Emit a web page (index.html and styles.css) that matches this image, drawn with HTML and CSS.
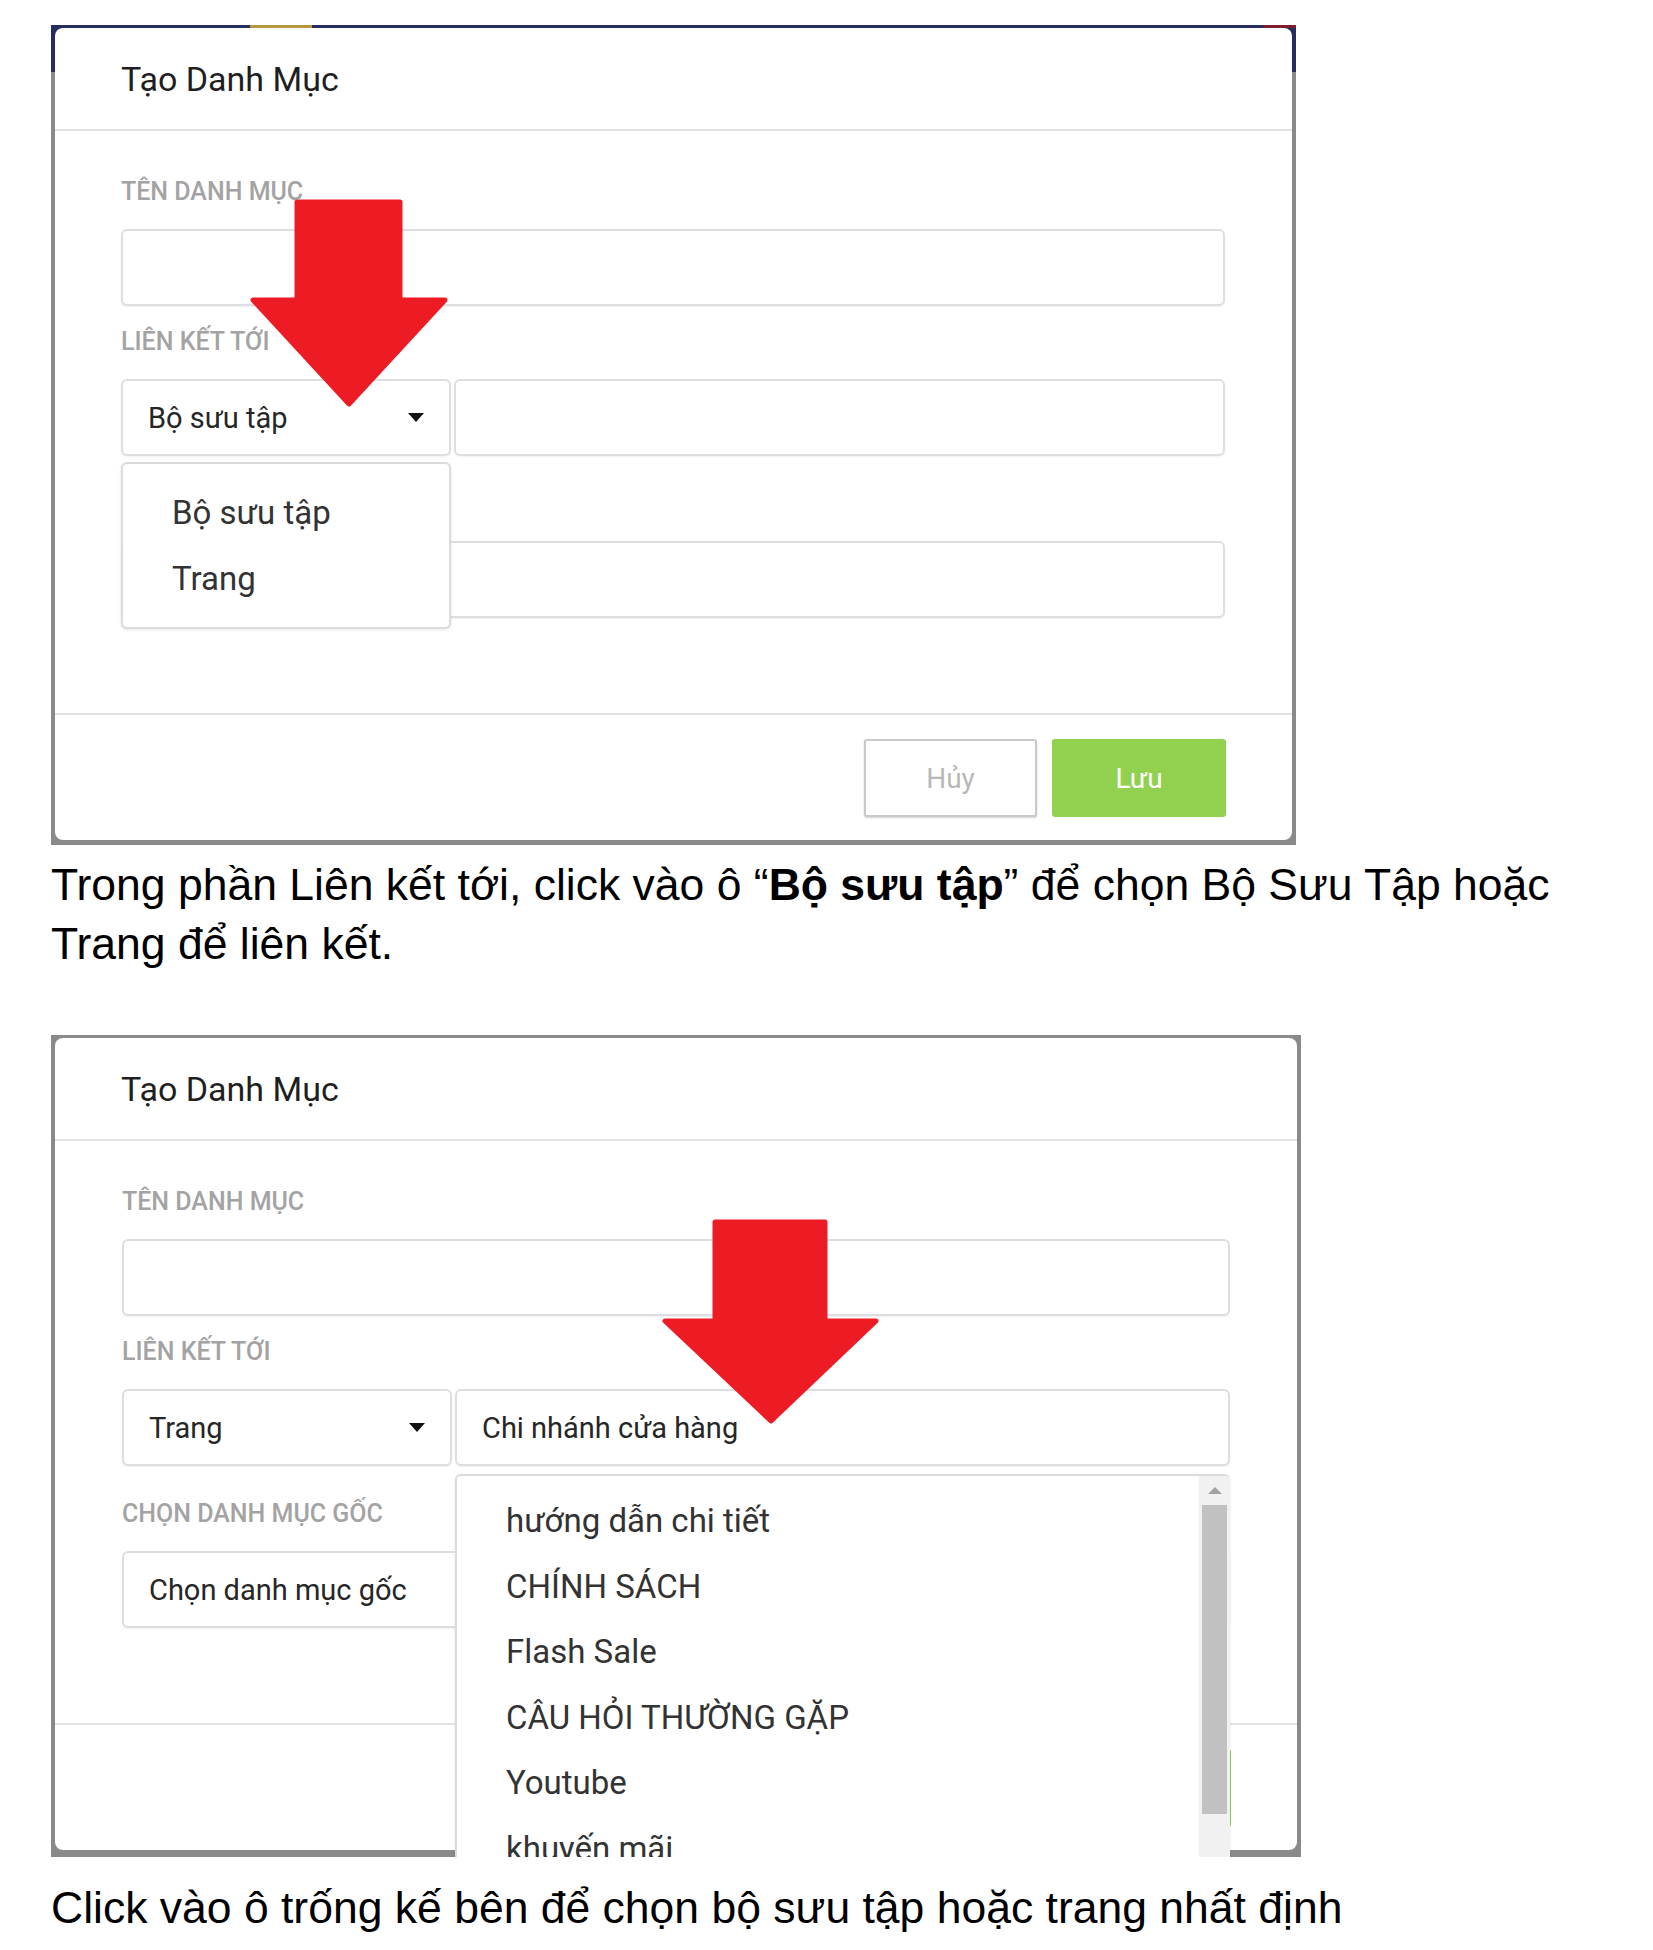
FILE: index.html
```html
<!DOCTYPE html>
<html lang="vi">
<head>
<meta charset="utf-8">
<title>Tạo Danh Mục</title>
<link rel="stylesheet" href="styles.css">
</head>
<body>
<main class="page">
  <figure class="shot shot--first">
    <div class="dialog">
      <header class="dialog__header"><h2 class="dialog__title">Tạo Danh Mục</h2></header>
      <div class="dialog__body">
        <div class="field field--name">
          <div class="field__label">TÊN DANH MỤC</div>
          <div class="input"></div>
        </div>
        <div class="field field--link">
          <div class="field__label">LIÊN KẾT TỚI</div>
          <div class="link-row">
            <div class="select-wrap">
              <div class="input select"><span class="value">Bộ sưu tập</span><span class="caret"></span></div>
              <ul class="menu menu--types">
                <li>Bộ sưu tập</li>
                <li>Trang</li>
              </ul>
            </div>
            <div class="target-wrap"><div class="input"></div></div>
          </div>
        </div>
        <div class="field field--parent">
          <div class="field__label"></div>
          <div class="input"></div>
        </div>
      </div>
      <footer class="dialog__footer">
        <button class="btn btn--cancel">Hủy</button>
        <button class="btn btn--save">Lưu</button>
      </footer>
    </div>
    <svg class="arrow arrow--first" width="198" height="208" viewBox="0 0 198 208"><polygon points="47,3 150,3 150,101 195,101 99,205 3,101 47,101"/></svg>
  </figure>

  <p class="caption caption--first">Trong phần Liên kết tới, click vào ô “<b>Bộ sưu tập</b>” để chọn Bộ Sưu Tập hoặc<br>Trang để liên kết.</p>

  <figure class="shot shot--second">
    <div class="dialog">
      <header class="dialog__header"><h2 class="dialog__title">Tạo Danh Mục</h2></header>
      <div class="dialog__body">
        <div class="field field--name">
          <div class="field__label">TÊN DANH MỤC</div>
          <div class="input"></div>
        </div>
        <div class="field field--link">
          <div class="field__label">LIÊN KẾT TỚI</div>
          <div class="link-row">
            <div class="select-wrap">
              <div class="input select"><span class="value">Trang</span><span class="caret"></span></div>
            </div>
            <div class="target-wrap">
              <div class="input"><span class="value">Chi nhánh cửa hàng</span></div>
              <div class="menu menu--pages">
                <ul class="menu__list">
                  <li>hướng dẫn chi tiết</li>
                  <li>CHÍNH SÁCH</li>
                  <li>Flash Sale</li>
                  <li>CÂU HỎI THƯỜNG GẶP</li>
                  <li>Youtube</li>
                  <li>khuyến mãi</li>
                </ul>
                <div class="scrollbar">
                  <div class="scrollbar__up"><span class="scrollbar__arrow"></span></div>
                  <div class="scrollbar__thumb"></div>
                  <div class="scrollbar__track"></div>
                </div>
              </div>
            </div>
          </div>
        </div>
        <div class="field field--parent">
          <div class="field__label">CHỌN DANH MỤC GỐC</div>
          <div class="input"><span class="value">Chọn danh mục gốc</span></div>
        </div>
      </div>
      <footer class="dialog__footer">
        <button class="btn btn--cancel">Hủy</button>
        <button class="btn btn--save">Lưu</button>
      </footer>
    </div>
    <svg class="arrow arrow--second" width="217" height="205" viewBox="0 0 217 205"><polygon points="53,3 163,3 163,102 214,102 109,202 3,102 53,102"/></svg>
  </figure>

  <p class="caption caption--second">Click vào ô trống kế bên để chọn bộ sưu tập hoặc trang nhất định</p>
</main>
</body>
</html>
```

FILE: styles.css
```css
* { box-sizing: border-box; }

html, body {
  margin: 0;
  padding: 0;
  background: #ffffff;
}

.page {
  padding: 25px 0 0 51px;
  font-family: Roboto, "Noto Sans", "Liberation Sans", sans-serif;
}

/* screenshot frame */
.shot {
  position: relative;
  margin: 0;
  overflow: hidden;
  display: flex;
  flex-direction: column;
}

.shot--first {
  width: 1245px;
  height: 820px;
  padding: 3px 4px 5px 4px;
  background:
    linear-gradient(to right, transparent 199px, #b8983e 199px, #b8983e 261px, transparent 261px, transparent 1212px, #7d1d2c 1212px) top left / 100% 3px no-repeat,
    linear-gradient(to bottom, #272d5f 0, #272d5f 47px, #8a8a8a 47px);
}

.shot--second {
  width: 1250px;
  height: 822px;
  padding: 3px 4px 7px 4px;
  background: #8a8a8a;
}

.dialog {
  flex: 1;
  display: flex;
  flex-direction: column;
  background: #ffffff;
  border-radius: 8px;
}

.dialog__header {
  height: 103px;
  padding: 31px 66px 0;
  border-bottom: 2px solid #e0e2e5;
}

.dialog__title {
  margin: 0;
  font-size: 34px;
  line-height: 40px;
  font-weight: 400;
  color: #1f1f1f;
}

.dialog__body {
  height: 582px;
  padding: 47px 67px 0 66px;
}

.shot--second .dialog__body {
  padding-left: 67px;
}

.field__label {
  height: 28px;
  margin-bottom: 23px;
  font-size: 25px;
  line-height: 28px;
  font-weight: 500;
  color: #a3a3a3;
  letter-spacing: 0;
  white-space: nowrap;
}

.field--name { margin-bottom: 22px; }
.field--link { margin-bottom: 34px; }

.input {
  height: 77px;
  border: 2px solid #dcdee1;
  border-radius: 6px;
  box-shadow: 0 1px 2px rgba(0, 0, 0, 0.06);
  background: #ffffff;
  display: flex;
  align-items: center;
  padding: 0 25px 0 25px;
  font-size: 29px;
  color: #262626;
  white-space: nowrap;
}

.link-row {
  display: grid;
  grid-template-columns: 330px 1fr;
  column-gap: 3px;
}

.select-wrap,
.target-wrap {
  position: relative;
}

.select {
  justify-content: space-between;
}

.caret {
  width: 0;
  height: 0;
  border-left: 8px solid transparent;
  border-right: 8px solid transparent;
  border-top: 9px solid #111111;
}

/* dropdown menus */
.menu {
  position: absolute;
  left: 0;
  width: 100%;
  margin: 0;
  background: #ffffff;
  border: 2px solid #d9dbde;
  border-radius: 6px;
  box-shadow: 0 1px 3px rgba(0, 0, 0, 0.1);
  z-index: 2;
}

.menu--types {
  top: calc(100% + 6px);
  height: 167px;
  padding: 16px 0 0;
  list-style: none;
}

.menu li {
  height: 66px;
  line-height: 66px;
  padding-left: 49px;
  font-size: 33px;
  color: #333333;
  white-space: nowrap;
}

.menu--pages {
  top: calc(100% + 8px);
  height: 420px;
  display: flex;
  border-right: none;
  border-radius: 6px 6px 0 0;
}

.menu__list {
  flex: 1;
  list-style: none;
  margin: 0;
  padding: 12px 0 0;
}

.menu--pages li {
  height: 65.6px;
  line-height: 65.6px;
}

.scrollbar {
  width: 31px;
  display: flex;
  flex-direction: column;
  background: #f1f1f1;
  border-top-right-radius: 6px;
}

.scrollbar__up {
  height: 29px;
  display: flex;
  align-items: center;
  justify-content: center;
}

.scrollbar__arrow {
  width: 0;
  height: 0;
  border-left: 7px solid transparent;
  border-right: 7px solid transparent;
  border-bottom: 7px solid #a3a3a3;
}

.scrollbar__thumb {
  height: 309px;
  margin: 0 3px;
  background: #c1c1c1;
}

.scrollbar__track {
  flex: 1;
}

/* footer */
.dialog__footer {
  flex: 1;
  display: flex;
  justify-content: flex-end;
  gap: 15px;
  padding: 24px 66px 0 0;
  border-top: 2px solid #e0e2e5;
}

.btn {
  width: 173px;
  height: 78px;
  font-family: Roboto, "Noto Sans", "Liberation Sans", sans-serif;
  font-size: 28px;
  border-radius: 3px;
  padding: 0;
}

.btn--cancel {
  background: #ffffff;
  border: 2px solid #c9c9c9;
  box-shadow: 0 1px 2px rgba(0, 0, 0, 0.18);
  color: #b8b8b8;
}

.btn--save {
  width: 174px;
  background: #92d050;
  border: none;
  color: #ffffff;
}

/* red arrows */
.arrow {
  position: absolute;
  z-index: 3;
}

.arrow polygon {
  fill: #ed1c24;
  stroke: #ed1c24;
  stroke-width: 5;
  stroke-linejoin: round;
}

.arrow--first { left: 199px; top: 174px; }
.arrow--second { left: 611px; top: 184px; }

/* captions */
.caption {
  margin: 0;
  font-family: "Liberation Sans", Arial, sans-serif;
  font-size: 44.5px;
  line-height: 59px;
  color: #000000;
  white-space: nowrap;
}

.caption b { font-weight: 700; }

.caption--first { margin-top: 10px; margin-bottom: 62px; }
.caption--second { margin-top: 21px; }
```
